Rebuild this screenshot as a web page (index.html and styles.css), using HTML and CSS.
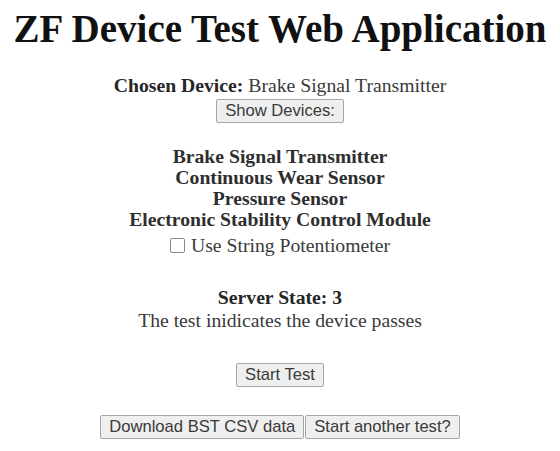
FILE: index.html
```html
<!DOCTYPE html>
<html>
<head>
<meta charset="utf-8">
<link rel="stylesheet" href="styles.css">
</head>
<body>
<div class="app">
  <h1 class="title">ZF Device Test Web Application</h1>
  <div class="chosen"><b>Chosen Device:</b> Brake Signal Transmitter</div>
  <button class="btn btn-show">Show Devices:</button>
  <ul class="devices">
    <li>Brake Signal Transmitter</li>
    <li>Continuous Wear Sensor</li>
    <li>Pressure Sensor</li>
    <li>Electronic Stability Control Module</li>
  </ul>
  <label class="check"><span class="box"></span> Use String Potentiometer</label>
  <div class="state"><b>Server State:</b> <b>3</b></div>
  <div class="result">The test inidicates the device passes</div>
  <div class="start-row"><button class="btn">Start Test</button></div>
  <div class="bottom-row"><button class="btn">Download BST CSV data</button><button class="btn">Start another test?</button></div>
</div>
</body>
</html>
```
FILE: styles.css
```css
html, body { margin: 0; padding: 0; background: #fff; }
body { font-family: "Liberation Serif", "Times New Roman", serif; color: #2a2a2a; font-size: 19.7px; line-height: 21px; }
.app { display: flex; flex-direction: column; align-items: center; text-align: center; }
.title { font-size: 39px; line-height: 46px; margin: 6px 0 23px; font-weight: bold; color: #111; white-space: nowrap; }
.chosen { color: #3a3a3a; }
.chosen b { color: #262626; }
.btn { font-family: "Liberation Sans", Arial, sans-serif; font-size: 16.6px; line-height: 18px; color: #3a3a3a; background: #efefef; border: 1px solid #a6a6a6; border-radius: 2px; padding: 2px 8px; margin: 0; }
.btn-show { margin-top: 3px; }
.devices { list-style: none; margin: 23px 0 0; padding: 0; font-weight: bold; color: #2e2e2e; }
.devices li { height: 21px; }
.check { display: flex; align-items: center; gap: 6px; margin-top: 5px; color: #3a3a3a; }
.box { width: 13px; height: 13px; border: 1px solid #8a8a8a; border-radius: 2px; background: #fff; }
.state { margin-top: 31px; color: #262626; }
.result { margin-top: 2px; color: #3a3a3a; }
.start-row { margin-top: 32px; }
.bottom-row { margin-top: 28px; display: flex; gap: 1px; }
```
